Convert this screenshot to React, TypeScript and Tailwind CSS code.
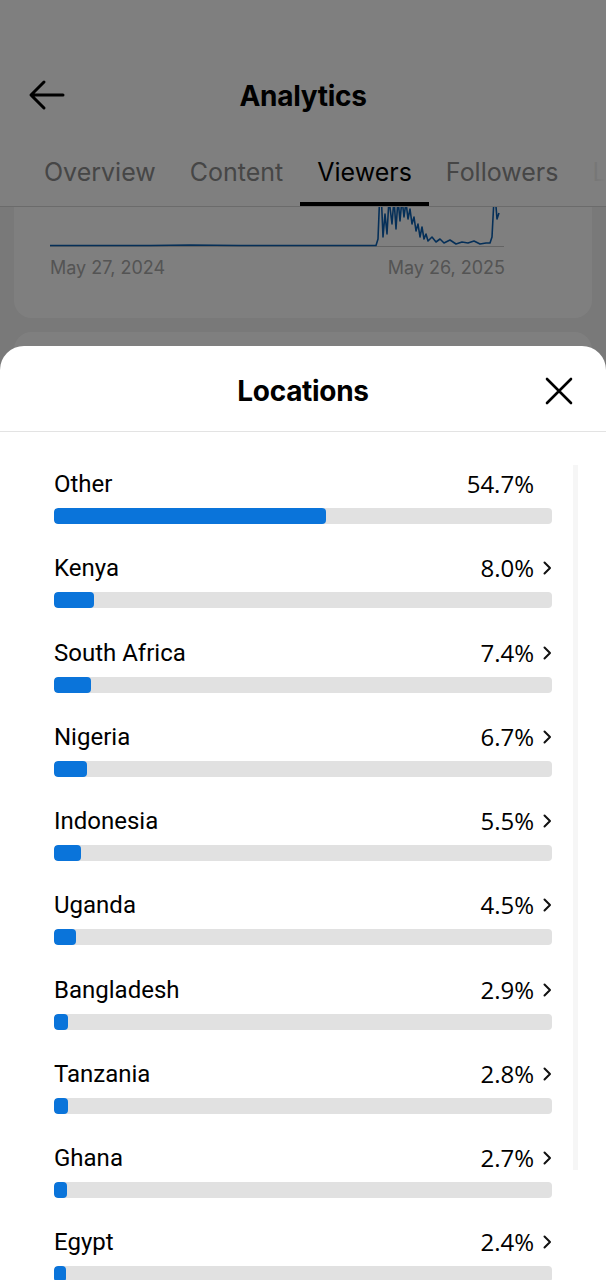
import React from 'react';

const locations = [
    { name: 'Other', pct: 54.7, more: false },
    { name: 'Kenya', pct: 8.0, more: true },
    { name: 'South Africa', pct: 7.4, more: true },
    { name: 'Nigeria', pct: 6.7, more: true },
    { name: 'Indonesia', pct: 5.5, more: true },
    { name: 'Uganda', pct: 4.5, more: true },
    { name: 'Bangladesh', pct: 2.9, more: true },
    { name: 'Tanzania', pct: 2.8, more: true },
    { name: 'Ghana', pct: 2.7, more: true },
    { name: 'Egypt', pct: 2.4, more: true },
];

const tabs = ['Overview', 'Content', 'Viewers', 'Followers', 'LIVE'];

// chart points in page coords, shifted into the svg (x - 50, y - 147)
const rawPoints: [number, number][] = [
    [50, 246.5], [150, 246.5], [190, 246], [240, 246.5], [300, 246.5], [376, 246.5],
    [378, 240], [380, 190], [381, 190], [383, 238], [385, 215], [387, 235], [389, 200],
    [392, 225], [394, 200], [396, 230], [398, 200], [400, 222], [402, 200], [404, 218],
    [406, 203], [408, 220], [410, 210], [412, 225], [414, 218], [416, 232], [418, 225],
    [420, 238], [422, 228], [424, 240], [426, 235], [428, 242], [432, 238], [436, 243],
    [440, 240], [444, 244], [450, 241], [456, 245], [462, 243], [468, 244], [474, 242],
    [480, 245], [486, 244], [490, 244], [492, 238], [494, 200], [495, 195], [497, 220], [499, 214],
];
const chartPoints = rawPoints.map(([x, y]) => `${x - 50},${y - 147}`).join(' ');

function Chevron() {
    return (
        <svg width="10" height="16" viewBox="0 0 10 16" fill="none" className="ml-2">
            <path d="M2.5 2.5 L8 8 L2.5 13.5" stroke="#111" strokeWidth="2" strokeLinecap="round" strokeLinejoin="round" />
        </svg>
    );
}

export default function App() {
    return (
        <div
            className="relative h-[1280px] w-[606px] overflow-hidden bg-[#f3f3f3]"
            style={{ fontFamily: 'Roboto, "Noto Sans", sans-serif' }}
        >
            {/* page behind the sheet */}
            <div className="bg-white">
                <div className="h-[60px]" />
                <div className="relative flex h-[72px] items-center justify-center">
                    <svg width="38" height="32" viewBox="0 0 38 32" fill="none" className="absolute left-[28px] top-[19px]">
                        <path d="M35 16 H4 M16 3 L3 16 L16 29" stroke="#000" strokeWidth="3" strokeLinecap="round" strokeLinejoin="round" />
                    </svg>
                    <h1 className="font-['Inter'] text-[28px] font-bold tracking-[-0.3px] text-black">Analytics</h1>
                </div>
                <div className="relative flex h-[75px] items-end overflow-hidden border-b border-[#d6d6d6] pl-[27px]">
                    {tabs.map((t) => (
                        <div
                            key={t}
                            className={
                                "flex h-full shrink-0 flex-col items-center justify-center px-[17px] font-['Inter'] text-[25px] " +
                                (t === 'Viewers' ? 'relative text-black' : 'text-[#8c8c8c]')
                            }
                        >
                            <span className="pt-[7px]">{t}</span>
                            {t === 'Viewers' && <div className="absolute bottom-0 left-0 right-0 h-[4px] bg-black" />}
                        </div>
                    ))}
                    <div className="absolute bottom-0 right-0 top-0 w-[28px] bg-gradient-to-r from-white/60 to-white" />
                </div>
            </div>

            <div className="px-[14px]">
                <div className="-mt-[1px] h-[112px] overflow-hidden rounded-b-[18px] bg-white">
                    <div className="-mt-[60px] pl-[36px]">
                        <svg width="455" height="101" viewBox="0 0 455 101" fill="none" className="block">
                            <line x1="0" y1="100.5" x2="454" y2="100.5" stroke="#c8c8c8" strokeWidth="1" />
                            <polyline points={chartPoints} stroke="#0b5fb0" strokeWidth="1.6" fill="none" strokeLinejoin="round" />
                        </svg>
                        <div className="mt-[7px] flex w-[455px] justify-between font-['Inter'] text-[18px] text-[#a8a8a8]">
                            <span>May 27, 2024</span>
                            <span>May 26, 2025</span>
                        </div>
                    </div>
                </div>
                <div className="mt-[14px] h-[200px] rounded-[18px] bg-white" />
            </div>

            {/* dim overlay */}
            <div className="absolute inset-0 bg-black/50" />

            {/* bottom sheet */}
            <div className="absolute bottom-0 left-0 right-0 top-[346px] rounded-t-[24px] bg-white">
                <div className="relative flex h-[86px] items-center justify-center border-b border-[#e3e3e3] pt-[5px]">
                    <h2 className="font-['Inter'] text-[28px] font-bold tracking-[-0.3px] text-black">Locations</h2>
                    <svg width="28" height="28" viewBox="0 0 28 28" fill="none" className="absolute right-[33px] top-[31px]">
                        <path d="M2 2 L26 26 M26 2 L2 26" stroke="#000" strokeWidth="2.6" strokeLinecap="round" />
                    </svg>
                </div>

                <div className="absolute right-[28px] top-[119px] h-[705px] w-[5px] bg-[#f6f6f6]" />

                <div className="flex flex-col gap-[30.25px] pl-[54px] pr-[54px] pt-[38px]">
                    {locations.map((loc) => (
                        <div key={loc.name}>
                            <div className="flex h-[28px] items-center justify-between">
                                <span className="text-[24px] text-black">{loc.name}</span>
                                <div className="flex items-center">
                                    <span className="font-['Open_Sans'] text-[24px] text-black">
                                        {loc.pct.toFixed(1)}%
                                    </span>
                                    {loc.more ? <Chevron /> : <span className="ml-2 w-[10px]" />}
                                </div>
                            </div>
                            <div className="mt-[10px] h-[16px] w-full overflow-hidden rounded-[4px] bg-[#e1e1e1]">
                                <div
                                    className="h-full rounded-[4px] bg-[#0a74da]"
                                    style={{ width: `${loc.pct}%`, minWidth: '12px' }}
                                />
                            </div>
                        </div>
                    ))}
                </div>
            </div>
        </div>
    );
}
